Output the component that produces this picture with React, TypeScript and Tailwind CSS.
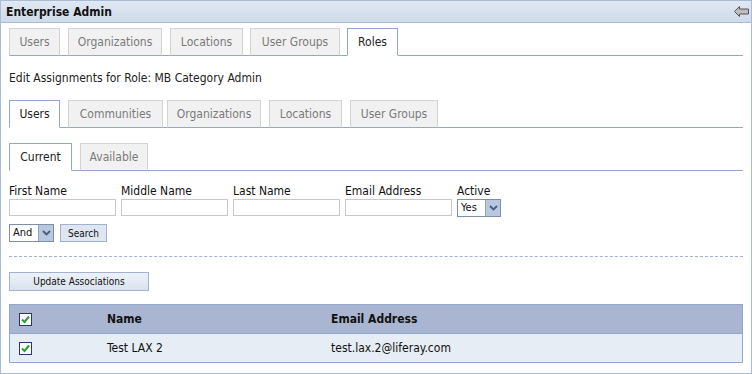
import React from 'react';

const font = { fontFamily: '"DejaVu Sans Condensed", "DejaVu Sans", Tahoma, sans-serif' };

const Tab = ({ label, active, w }: { label: string; active?: boolean; w: string }) => (
  <div
    className={`${w} h-[28px] -mb-px flex items-center justify-center border text-[12px] ${
      active
        ? 'bg-white border-[#8fa8cc] border-b-white text-[#222]'
        : 'bg-[#f1f1f1] border-[#d3d3d3] border-b-[#8fa8cc] text-[#7a7a7a]'
    }`}
  >
    {label}
  </div>
);

// widths include the left margin of each tab so the odd spacing matches
const TabRow = ({ tabs, active, widths }: { tabs: string[]; active: number; widths: string[] }) => (
  <div className="flex border-b border-[#8fa8cc] items-end">
    {tabs.map((t, i) => (
      <Tab key={t} label={t} active={i === active} w={widths[i]} />
    ))}
  </div>
);

const Check = () => (
  <div className="w-[13px] h-[13px] border border-[#1c3e6e] bg-white flex items-center justify-center">
    <svg width="9" height="9" viewBox="0 0 9 9">
      <path d="M1 4.5 L3.5 7 L8 1.5" stroke="#2aa02a" strokeWidth="2" fill="none" />
    </svg>
  </div>
);

const SelectBox = ({ value, w }: { value: string; w: string }) => (
  <div className={`${w} h-[18px] border border-[#7f8fa6] bg-white flex items-center text-[11px] text-[#111]`}>
    <span className="flex-1 pl-[3px]">{value}</span>
    <div className="w-[15px] h-[16px] bg-[#b8c8e0] border-l border-[#90a4c4] flex items-center justify-center">
      <svg width="9" height="6" viewBox="0 0 9 6">
        <path d="M1 1 L4.5 4.5 L8 1" stroke="#4a5a78" strokeWidth="1.8" fill="none" />
      </svg>
    </div>
  </div>
);

export default function App() {
  const fields = ['First Name', 'Middle Name', 'Last Name', 'Email Address'];
  return (
    <div className="w-[752px] h-[374px] bg-white overflow-hidden" style={font}>
      <div className="h-[374px] border border-[#a9bcd6] flex flex-col">
        {/* title bar */}
        <div className="h-[22px] bg-gradient-to-b from-[#e0e8f2] to-[#cfdbea] border-b border-[#a9bcd6] flex items-center justify-between pl-[5px] pr-[2px]">
          <span className="text-[12px] font-bold text-[#111]">Enterprise Admin</span>
          <svg width="15" height="11" viewBox="0 0 15 11">
            <path d="M0.5 5.5 L5.5 0.5 L5.5 3 L14.5 3 L14.5 8 L5.5 8 L5.5 10.5 Z" fill="#bdbdbd" stroke="#555" strokeWidth="1" />
          </svg>
        </div>

        <div className="pl-[8px] pr-[8px] pt-[5px] flex flex-col">
          <TabRow
            tabs={['Users', 'Organizations', 'Locations', 'User Groups', 'Roles']}
            active={4}
            widths={['w-[51px]', 'w-[94px] ml-[8px]', 'w-[73px] ml-[8px]', 'w-[90px] ml-[7px]', 'w-[51px] ml-[7px]']}
          />
          <div className="h-[44px] flex items-center text-[12px] text-[#222]">
            Edit Assignments for Role: MB Category Admin
          </div>
          <TabRow
            tabs={['Users', 'Communities', 'Organizations', 'Locations', 'User Groups']}
            active={0}
            widths={['w-[51px]', 'w-[95px] ml-[8px]', 'w-[94px] ml-[4px]', 'w-[73px] ml-[8px]', 'w-[88px] ml-[8px]']}
          />
          <div className="h-[15px]" />
          <TabRow tabs={['Current', 'Available']} active={0} widths={['w-[63px]', 'w-[68px] ml-[8px]']} />

          <div className="flex gap-[5px] mt-[13px]">
            {fields.map((f) => (
              <div key={f} className="flex flex-col">
                <span className="text-[12px] text-[#111] leading-[15px]">{f}</span>
                <div className="w-[107px] h-[17px] border border-[#c8c8c8] bg-white" />
              </div>
            ))}
            <div className="flex flex-col">
              <span className="text-[12px] text-[#111] leading-[15px]">Active</span>
              <SelectBox value="Yes" w="w-[44px]" />
            </div>
          </div>

          <div className="flex gap-[6px] mt-[7px] items-start">
            <SelectBox value="And" w="w-[45px]" />
            <button className="w-[47px] h-[18px] border border-[#9fb2cf] bg-[#dfe6f0] text-[10px] text-[#111]">
              Search
            </button>
          </div>

          <div className="border-t border-dashed border-[#9fb2cf] mt-[14px]" />

          <button className="mt-[15px] w-[140px] h-[19px] border border-[#9fb2cf] bg-gradient-to-b from-[#eef2f7] to-[#d9e2ee] text-[10px] text-[#111]">
            Update Associations
          </button>

          <div className="mt-[13px] border border-[#8fa8cc]">
            <div className="h-[29px] bg-[#aab6d1] border-b border-[#8fa8cc] flex items-center text-[12px] font-bold text-[#111]">
              <div className="w-[97px] pl-[9px]"><Check /></div>
              <div className="w-[224px]">Name</div>
              <div>Email Address</div>
            </div>
            <div className="h-[28px] bg-[#e6edf5] flex items-center text-[12px] text-[#111]">
              <div className="w-[97px] pl-[9px]"><Check /></div>
              <div className="w-[224px]">Test LAX 2</div>
              <div>test.lax.2@liferay.com</div>
            </div>
          </div>
        </div>
      </div>
    </div>
  );
}
